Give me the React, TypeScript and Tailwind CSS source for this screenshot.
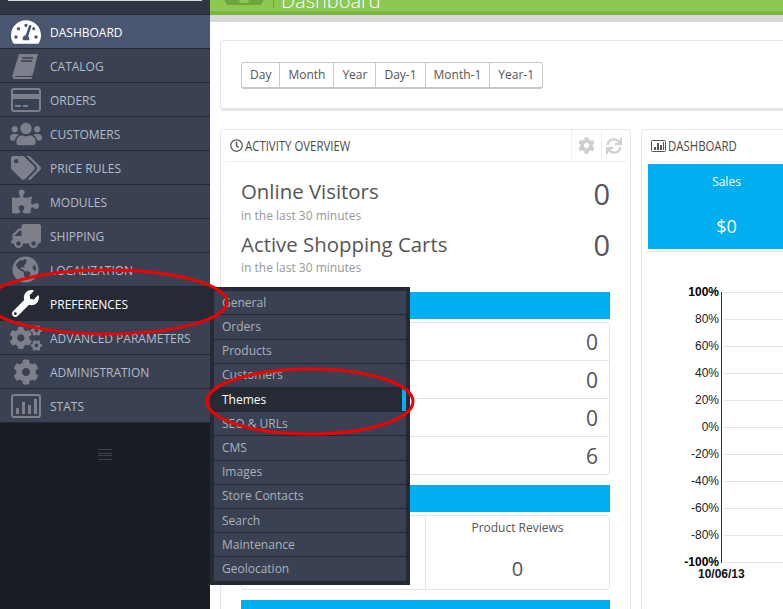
import type { ReactNode } from 'react';
import { FaCog, FaCogs, FaGlobeAmericas, FaPuzzlePiece, FaRegClock, FaSync, FaTachometerAlt, FaTags, FaTruck, FaUsers, FaWrench } from 'react-icons/fa';

const menu = [
    { label: 'DASHBOARD', icon: 'dash', active: true },
    { label: 'CATALOG', icon: 'book' },
    { label: 'ORDERS', icon: 'card' },
    { label: 'CUSTOMERS', icon: 'users' },
    { label: 'PRICE RULES', icon: 'tags' },
    { label: 'MODULES', icon: 'puzzle' },
    { label: 'SHIPPING', icon: 'truck' },
    { label: 'LOCALIZATION', icon: 'globe' },
    { label: 'PREFERENCES', icon: 'wrench', open: true },
    { label: 'ADVANCED PARAMETERS', icon: 'gears' },
    { label: 'ADMINISTRATION', icon: 'gear' },
    { label: 'STATS', icon: 'stats' },
];

const submenu = ['General', 'Orders', 'Products', 'Customers', 'Themes', 'SEO & URLs', 'CMS', 'Images', 'Store Contacts', 'Search', 'Maintenance', 'Geolocation'];
const ranges = ['Day', 'Month', 'Year', 'Day-1', 'Month-1', 'Year-1'];
const axis = ['100%', '80%', '60%', '40%', '20%', '0%', '-20%', '-40%', '-60%', '-80%', '-100%'];

const MenuIcon = ({ name, color }: { name: string; color: string }) => {
    switch (name) {
        case 'dash':
            return <FaTachometerAlt size={30} color={color} />;
        case 'book':
            return (
                <svg width="28" height="26" viewBox="0 0 28 26">
                    <path d="M7 1h19l-5 20c-.5 1.500-1.500 2-3 2H4c-1 0-1 1-.5 1H20l-.5 2H3c-2 0-3-1.500-2.500-4z" fill={color} />
                    <path d="M10 5h11M9 8h11" stroke="#39404f" strokeWidth="1.500" />
                </svg>
            );
        case 'card':
            return (
                <svg width="30" height="24" viewBox="0 0 30 24">
                    <rect x="1" y="1" width="28" height="22" rx="2" fill="none" stroke={color} strokeWidth="2" />
                    <rect x="1" y="6" width="28" height="5" fill={color} />
                    <path d="M4 18h6M12 18h5" stroke={color} strokeWidth="2" />
                </svg>
            );
        case 'users':
            return <FaUsers size={32} color={color} />;
        case 'tags':
            return <FaTags size={30} color={color} />;
        case 'puzzle':
            return <FaPuzzlePiece size={27} color={color} />;
        case 'truck':
            return <FaTruck size={30} color={color} className="-scale-x-100" />;
        case 'globe':
            return <FaGlobeAmericas size={27} color={color} />;
        case 'wrench':
            return <FaWrench size={27} color={color} />;
        case 'gears':
            return <FaCogs size={32} color={color} />;
        case 'gear':
            return <FaCog size={26} color={color} />;
        default:
            return (
                <svg width="30" height="24" viewBox="0 0 30 24">
                    <rect x="1" y="1" width="28" height="22" rx="2" fill="none" stroke={color} strokeWidth="2" />
                    <path d="M5 20h3v-6H5zM11 20h3V8h-3zM17 20h3v-9h-3zM23 20h3V5h-3z" fill={color} />
                </svg>
            );
    }
};

const Sidebar = () => (
    <aside className="w-[210px] shrink-0 bg-[#1a1d24] flex flex-col">
        <div className="h-[15px] bg-[#2f3543] border-b border-[#252934] px-2">
            <div className="h-px bg-[#d8d8d8]" />
        </div>
        {menu.map((item) => (
            <div
                key={item.label}
                className={`h-[34px] flex items-center border-b border-[#232732] ${item.active ? 'bg-[#4a566f] text-white' : item.open ? 'bg-[#262a35] text-white' : 'bg-[#3a4152] text-[#b4bcc9]'}`}
            >
                <div className="w-[50px] shrink-0 flex justify-center pl-[1px]">
                    <MenuIcon name={item.icon} color={item.active || item.open ? '#ffffff' : '#7d808a'} />
                </div>
                <span className="text-[12px] pt-[2px]">{item.label}</span>
            </div>
        ))}
        <div className="flex justify-center pt-[26px]">
            <div className="w-[14px] h-[11px] border-y border-[#3d4250] flex flex-col justify-center gap-[1px]">
                <div className="h-px bg-[#3d4250]" />
                <div className="h-px bg-[#3d4250]" />
            </div>
        </div>
    </aside>
);

const Chart = () => (
    <svg width="142" height="300" viewBox="0 0 142 300" className="block">
        {axis.map((label, i) => (
            <g key={label}>
                <line x1="78" x2="142" y1={10.5 + i * 27} y2={10.5 + i * 27} stroke="#e3e3e3" />
                <text
                    x="73"
                    y={14 + i * 27}
                    textAnchor="end"
                    fontSize="12"
                    fontFamily="Liberation Sans"
                    fontWeight={i === 0 || i === 10 ? 700 : 400}
                    fill={i === 0 || i === 10 ? '#000' : '#222'}
                >
                    {label}
                </text>
            </g>
        ))}
        <line x1="75.5" x2="75.5" y1="10" y2="281" stroke="#333" />
        <text x="52" y="296" fontSize="12" fontWeight="700" fontFamily="Liberation Sans" fill="#111">10/06/13</text>
    </svg>
);

const PanelTitle = ({ children }: { children: ReactNode }) => (
    <span className="inline-block origin-left scale-x-[.76] whitespace-nowrap text-[15px] text-[#4a4a4a]">{children}</span>
);

const BlueBar = () => <div className="h-[27px] bg-[#00aff0]" />;

const App = () => (
    <div className="relative w-[783px] h-[609px] overflow-hidden flex bg-white font-['Open_Sans',sans-serif]">
        <Sidebar />
        <main className="flex-1 min-w-0">
            <div className="h-[15px] bg-[#8bc953] border-b-[4px] border-[#78b63f] overflow-hidden flex items-start pl-[14px]">
                <div className="w-[40px] h-[5px] bg-[#6fa53f] flex justify-center [clip-path:polygon(0_0,100%_0,92%_100%,8%_100%)]">
                    <div className="w-[10px] h-[3px] rounded-b-full bg-[#8bc953]" />
                </div>
                <div className="w-px h-[8px] bg-[#6fa53f] ml-[9px]" />
                <span className="ml-[7px] -mt-[14px] text-[20px] leading-[30px] font-light text-white">Dashboard</span>
            </div>
            <div className="h-[7px] bg-[#d9d9d9]" />
            <div className="pl-[10px] pt-[18px] w-[600px]">
                <section className="h-[71px] border border-[#e6e6e6] border-b-[3px] rounded-[4px] pl-[20px] pt-[20px]">
                    <div className="inline-flex h-[27px] border border-[#c8c8c8] border-b-[2px] rounded-[3px] text-[12px] text-[#555]">
                        {ranges.map((r, i) => (
                            <div key={r} className={`px-[8px] flex items-center ${i > 0 ? 'border-l border-[#c8c8c8]' : ''}`}>{r}</div>
                        ))}
                    </div>
                </section>
                <div className="flex mt-[18px] gap-[10px]">
                    <section className="w-[411px] shrink-0 h-[520px] border border-[#e6e6e6] rounded-[4px] px-[4px]">
                        <header className="h-[32px] flex items-center border-b border-[#eeeeee] pl-[5px]">
                            <FaRegClock size={13} color="#555" className="mr-[2px] shrink-0" />
                            <PanelTitle>ACTIVITY OVERVIEW</PanelTitle>
                            <div className="ml-auto flex h-full">
                                <div className="w-[30px] flex items-center justify-center border-l border-[#eeeeee]">
                                    <FaCog size={17} color="#cfcfcf" />
                                </div>
                                <div className="w-[25px] flex items-center justify-center border-l border-[#eeeeee]">
                                    <FaSync size={16} color="#cfcfcf" />
                                </div>
                            </div>
                        </header>
                        <div className="px-[16px] text-[#555]">
                            <div className="flex justify-between items-start pt-[13px] h-[44px]">
                                <div className="text-[20.4px] leading-[32px]">Online Visitors</div>
                                <div className="text-[29px] leading-[36px] mt-[1px]">0</div>
                            </div>
                            <div className="text-[12px] leading-[14px] text-[#999] mt-[3px]">in the last 30 minutes</div>
                            <div className="flex justify-between items-start mt-[5px] h-[33px]">
                                <div className="text-[20.4px] leading-[32px]">Active Shopping Carts</div>
                                <div className="text-[29px] leading-[36px] -mt-[1px]">0</div>
                            </div>
                            <div className="text-[12px] leading-[14px] text-[#999]">in the last 30 minutes</div>
                            <div className="mt-[17px]"><BlueBar /></div>
                            <div className="mt-[3px] h-[153px] border border-[#e3e3e3] rounded-[3px] flex flex-col">
                                {['0', '0', '0', '6'].map((v, i) => (
                                    <div key={i} className={`flex-1 flex items-center justify-end pr-[11px] pt-[3px] text-[21px] ${i > 0 ? 'border-t border-[#e3e3e3]' : ''}`}>{v}</div>
                                ))}
                            </div>
                            <div className="mt-[10px]"><BlueBar /></div>
                            <div className="mt-[3px] h-[75px] border border-[#e3e3e3] rounded-[3px] flex">
                                <div className="flex-1" />
                                <div className="w-[184px] border-l border-[#e3e3e3] flex flex-col items-center pt-[3px]">
                                    <div className="text-[12px] leading-[18px]">Product Reviews</div>
                                    <div className="text-[20px] leading-[28px] mt-[18px]">0</div>
                                </div>
                            </div>
                            <div className="mt-[10px]"><BlueBar /></div>
                        </div>
                    </section>
                    <section className="flex-1 min-w-[160px] h-[520px] border border-[#e6e6e6] rounded-[4px] pl-[4px]">
                        <header className="h-[32px] flex items-center border-b border-[#eeeeee] pl-[5px]">
                            <svg width="15" height="12" viewBox="0 0 15 12" className="mr-[2px] shrink-0">
                                <rect x=".5" y=".5" width="14" height="11" rx="1" fill="none" stroke="#555" />
                                <path d="M3 10h2V7H3zM6 10h2V3H6zM9 10h2V5H9zM12 10h1V2h-1z" fill="#555" />
                            </svg>
                            <PanelTitle>DASHBOARD</PanelTitle>
                        </header>
                        <div className="h-[85px] mt-[2px] ml-[2px] bg-[#00aff0] text-white text-center w-[157px]">
                            <div className="text-[12px] leading-[16px] pt-[10px]">Sales</div>
                            <div className="text-[18px] leading-[24px] mt-[24px]">$0</div>
                        </div>
                        <div className="h-px bg-[#e3e3e3] mt-[2px]" />
                        <div className="pt-[30px]"><Chart /></div>
                    </section>
                </div>
            </div>
        </main>

        {/* flyout menu */}
        <div className="absolute left-[210px] top-[287px] w-[200px] h-[298px] bg-[#262a35] px-[4px] pt-[4.3px]">
            {submenu.map((s) => (
                <div
                    key={s}
                    className={`relative h-[24.2px] flex items-center pl-[8px] text-[12px] border-b border-[#232732] ${s === 'Themes' ? 'bg-[#262a35] text-white' : 'bg-[#3a4152] text-[#aab1bd]'}`}
                >
                    {s}
                    {s === 'Themes' && <div className="absolute right-0 top-0 bottom-0 w-[4px] bg-[#00aff0]" />}
                </div>
            ))}
        </div>

        {/* red marks drawn on the screenshot */}
        <svg width="783" height="609" viewBox="0 0 783 609" className="absolute inset-0 pointer-events-none">
            <ellipse cx="107" cy="302" rx="120" ry="32" fill="none" stroke="#f00000" strokeWidth="3" />
            <ellipse cx="310" cy="401.500" rx="103" ry="32.500" fill="none" stroke="#f00000" strokeWidth="3" />
        </svg>
    </div>
);

export default App;
